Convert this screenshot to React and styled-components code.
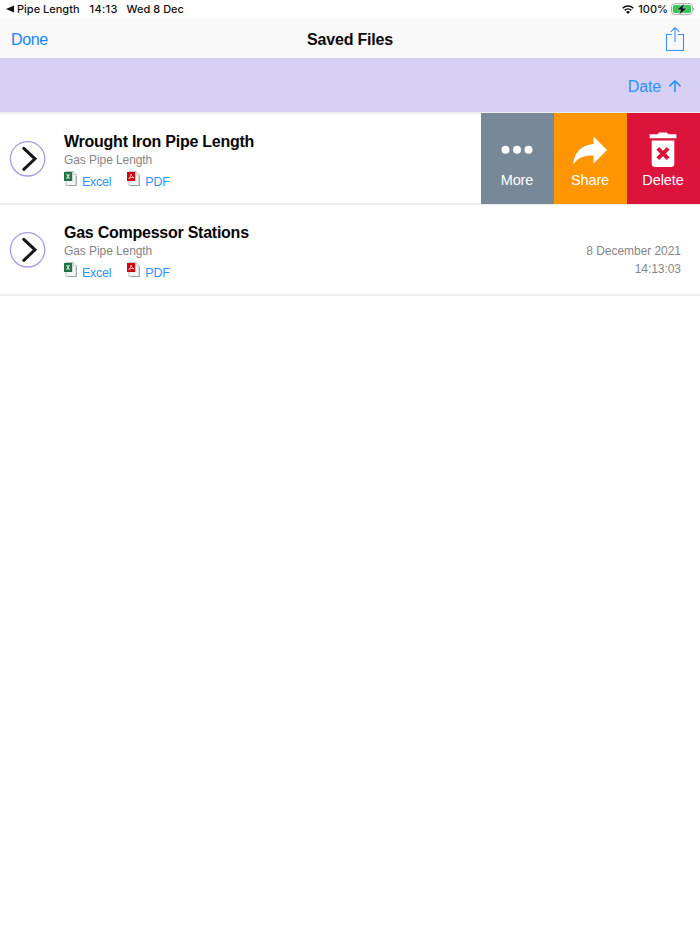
import React from 'react';
import styled, { createGlobalStyle } from 'styled-components';

const GlobalStyle = createGlobalStyle`
  * { box-sizing: border-box; }
  body {
    margin: 0;
    background: #fff;
    font-family: 'Liberation Sans', Arial, sans-serif;
  }
  svg { display: block; flex: none; }
`;

const StatusBar = styled.div`
  display: flex;
  align-items: center;
  justify-content: space-between;
  height: 18px;
  padding: 0 5px 0 6px;
  font: 500 11px/18px Inter, sans-serif;
  color: #111;
  white-space: pre;
`;

const StatusGroup = styled.div`
  display: flex;
  align-items: center;
`;

const StatusText = styled.span`
  margin-left: ${(p) => p.$gap || 0}px;
  letter-spacing: ${(p) => p.$spacing || 0}px;
`;

const NavBar = styled.div`
  display: grid;
  grid-template-columns: 1fr auto 1fr;
  align-items: center;
  height: 40px;
  padding: 3px 15px 0 11px;
  background: #f9f9f9;
`;

const NavButton = styled.button`
  justify-self: ${(p) => (p.$end ? 'end' : 'start')};
  padding: 0;
  border: 0;
  background: none;
  font: 16px/20px 'Liberation Sans', sans-serif;
  letter-spacing: -0.35px;
  color: #1684fb;
`;

const NavTitle = styled.h1`
  margin: 0 0 0 4px;
  font-size: 16px;
  line-height: 20px;
  letter-spacing: -0.2px;
  color: #0b0b0b;
`;

const SortBar = styled.div`
  display: flex;
  align-items: center;
  justify-content: flex-end;
  gap: 8px;
  height: 56px;
  padding: 2px 19px 0 0;
  border-top: 1px solid #d3cfe6;
  border-bottom: 2px solid #eeedf1;
  background: #d6cff3;
  font-size: 16px;
  letter-spacing: -0.15px;
  color: #2b93fb;
`;

const Row = styled.div`
  display: flex;
  height: 91px;
  padding-left: 9px;
  border-bottom: 2px solid #ededed;
`;

const Info = styled.div`
  flex: 1;
  padding: 18px 0 0 18px;
`;

const FileName = styled.div`
  font-size: 16px;
  font-weight: bold;
  line-height: 20px;
  letter-spacing: -0.25px;
  color: #060606;
`;

const Kind = styled.div`
  font-size: 12px;
  line-height: 16px;
  letter-spacing: -0.08px;
  color: #858585;
`;

const Links = styled.div`
  display: flex;
  gap: 16px;
  margin-top: 3px;
`;

const FileLink = styled.a`
  display: flex;
  gap: 5px;
  font-size: 12.5px;
  line-height: 23px;
  letter-spacing: -0.25px;
  color: #2b93fb;
`;

const Stamp = styled.div`
  padding: 37px 19px 0 0;
  font-size: 12px;
  line-height: 18px;
  letter-spacing: -0.05px;
  text-align: right;
  color: #858585;
`;

const Actions = styled.div`
  display: flex;
  height: 91px;
  margin-top: -1px;
`;

const Action = styled.div`
  display: flex;
  flex-direction: column;
  align-items: center;
  width: 73px;
  padding: 16px 1px 0 0;
  background: ${(p) => p.$color};
  font-size: 14.5px;
  line-height: 20px;
  letter-spacing: -0.1px;
  color: #fff;
`;

const ActionIcon = styled.div`
  height: 41px;
`;

const RowArrow = styled.div`
  display: flex;
  align-items: center;
  height: 89px;
`;

function WifiIcon() {
  return (
    <svg width="12" height="9" viewBox="0 0 12 9">
      <path d="M0.7 3.2a7.6 7.6 0 0 1 10.6 0M2.7 5.3a4.8 4.8 0 0 1 6.6 0" fill="none" stroke="#111" strokeWidth="1.6" />
      <path d="M6 9 4 7a2.9 2.9 0 0 1 4 0z" fill="#111" />
    </svg>
  );
}

function BatteryIcon() {
  return (
    <svg width="24" height="12" viewBox="0 0 24 12">
      <rect x="0.5" y="0.6" width="20.8" height="10.8" rx="3" fill="#fff" stroke="#aaa" />
      <rect x="1.8" y="1.9" width="18.2" height="8.2" rx="1.8" fill="#34c759" />
      <path d="M22.4 4.5v3.2q1-.4 1-1.6t-1-1.6z" fill="#999" />
      <path d="M13.2 0.8 5.6 6.8h4.1L8.4 11.4l7.7-6.2h-4.2z" fill="#111" stroke="#d9f5e0" strokeWidth="0.4" />
    </svg>
  );
}

function ExportIcon() {
  return (
    <svg width="20" height="26" viewBox="0 0 20 26" fill="none" stroke="#3d8ff8" strokeWidth="1.1">
      <path d="M7 7.5H1.5v16h17v-16H13M10 15V.8M5.8 4.8 10 .6l4.2 4.2" />
    </svg>
  );
}

function SortArrow() {
  return (
    <svg width="12" height="13" viewBox="0 0 12 13" fill="none" stroke="#2b93fb" strokeWidth="1.6" strokeLinecap="round" strokeLinejoin="round">
      <path d="M6 11.6V.9M.9 5.8 6 .9l5.1 4.9" />
    </svg>
  );
}

function ChevronCircle() {
  return (
    <svg width="37" height="37" viewBox="0 0 37 37" fill="none">
      <circle cx="18.6" cy="18.8" r="17.2" stroke="#a99bdc" strokeWidth="1.3" />
      <path d="M14.8 8.3 26 18.8 14.8 29.3" stroke="#171717" strokeWidth="3" strokeLinecap="round" />
    </svg>
  );
}

function DocIcon({ type }) {
  const excel = type === 'excel';
  return (
    <svg width="13" height="15" viewBox="0 0 13 15">
      <path d="M2 .5h7.3l3 3v11H2z" fill="#f3f5f4" stroke="#a9b4b0" strokeWidth="0.8" />
      <path d="M9.2.5v3.2h3.1" fill="#fff" stroke="#a9b4b0" strokeWidth="0.6" />
      <path d="M12.3 5v9.5H4" fill="none" stroke="#87958f" strokeWidth="0.8" />
      <rect y="1" width="8.2" height="9" fill={excel ? '#217346' : '#cf0510'} />
      {excel ? (
        <path d="m2.6 3 2.9 4.8M5.5 3 2.6 7.8" stroke="#dcebe2" strokeWidth="1.1" />
      ) : (
        <path d="M1.6 7.6C3.1 6.7 4 4.8 4 3c.4 2 1.6 3.4 3.1 3.7C5.2 6.2 3 6.7 1.6 7.6z" fill="none" stroke="#ffe4e4" strokeWidth="0.8" />
      )}
    </svg>
  );
}

function MoreIcon() {
  return (
    <svg width="32" height="41" viewBox="0 0 32 41" fill="#fff">
      <circle cx="4.5" cy="20.8" r="4" />
      <circle cx="16" cy="20.8" r="4" />
      <circle cx="27.5" cy="20.8" r="4" />
    </svg>
  );
}

function ShareIcon() {
  return (
    <svg width="34" height="41" viewBox="0 0 34 41" fill="#fff">
      <path d="M20.5 7.5 34 21 20.5 34.5v-8C12 26 5 28.3.2 35.5.8 24.2 8.3 15.8 20.5 15z" />
    </svg>
  );
}

function TrashIcon() {
  return (
    <svg width="28" height="41" viewBox="0 0 28 41" fill="#fff">
      <path d="M.6 5.2h7.9L10.2 3.4h7.6l1.7 1.8h7.9v4.1H.6zM2.7 11.4h22.6v23.2a3.5 3.5 0 0 1-3.5 3.5H6.2a3.5 3.5 0 0 1-3.5-3.5z" />
      <path d="m8.8 19.3 10.4 10.4m0-10.4L8.8 29.7" stroke="#dc143c" strokeWidth="4" />
    </svg>
  );
}

function FileRow({ name, children }) {
  return (
    <Row>
      <RowArrow><ChevronCircle /></RowArrow>
      <Info>
        <FileName>{name}</FileName>
        <Kind>Gas Pipe Length</Kind>
        <Links>
          <FileLink><DocIcon type="excel" />Excel</FileLink>
          <FileLink><DocIcon type="pdf" />PDF</FileLink>
        </Links>
      </Info>
      {children}
    </Row>
  );
}

export default function App() {
  return (
    <>
      <GlobalStyle />
      <StatusBar>
        <StatusGroup>
          <svg width="8" height="8" viewBox="0 0 8 8"><path d="M0 4 8 .5v7z" fill="#111" /></svg>
          <StatusText $gap={3}>Pipe Length</StatusText>
          <StatusText $gap={10} $spacing={0.3}>14:13</StatusText>
          <StatusText $gap={9}>Wed 8 Dec</StatusText>
        </StatusGroup>
        <StatusGroup>
          <WifiIcon />
          <StatusText $gap={4}>100%</StatusText>
          <StatusText $gap={3}><BatteryIcon /></StatusText>
        </StatusGroup>
      </StatusBar>
      <NavBar>
        <NavButton>Done</NavButton>
        <NavTitle>Saved Files</NavTitle>
        <NavButton $end><ExportIcon /></NavButton>
      </NavBar>
      <SortBar>
        <span>Date</span>
        <SortArrow />
      </SortBar>
      <FileRow name="Wrought Iron Pipe Length">
        <Actions>
          <Action $color="#778899">
            <ActionIcon><MoreIcon /></ActionIcon>
            More
          </Action>
          <Action $color="#ff9500">
            <ActionIcon><ShareIcon /></ActionIcon>
            Share
          </Action>
          <Action $color="#dc143c">
            <ActionIcon><TrashIcon /></ActionIcon>
            Delete
          </Action>
        </Actions>
      </FileRow>
      <FileRow name="Gas Compessor Stations">
        <Stamp>
          <div>8 December 2021</div>
          <div>14:13:03</div>
        </Stamp>
      </FileRow>
    </>
  );
}
